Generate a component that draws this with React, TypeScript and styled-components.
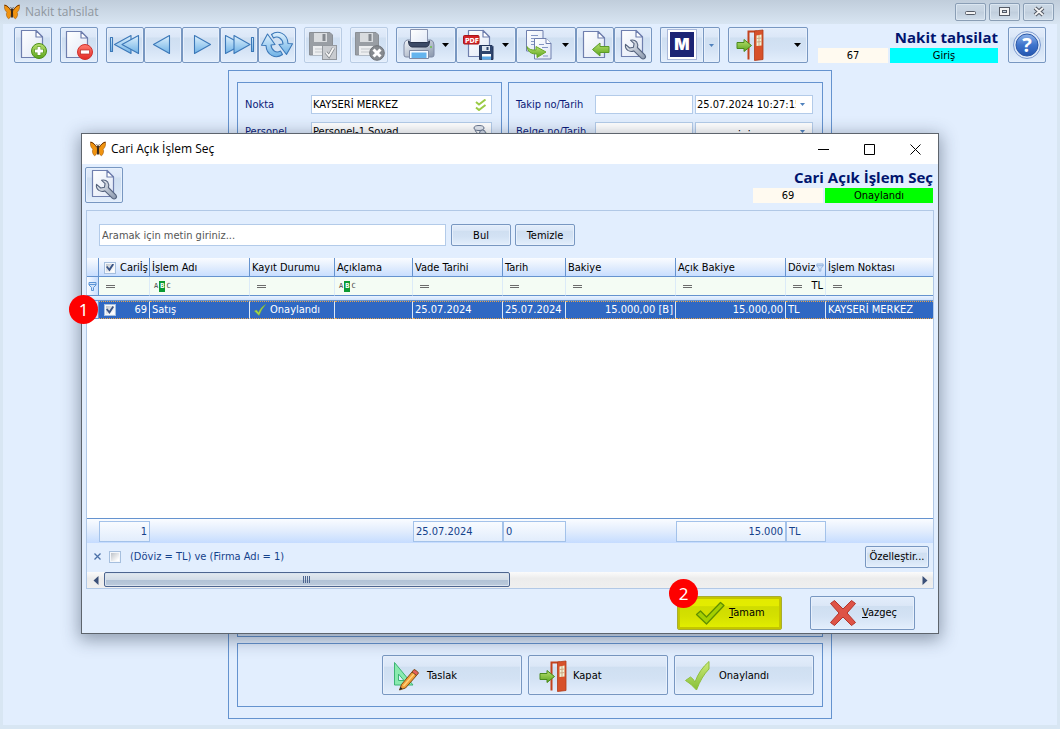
import React from "react";
import styled, { createGlobalStyle, css } from "styled-components";

const Global = createGlobalStyle`
  *, *::before, *::after { box-sizing: border-box; }
  body { margin: 0; background: #d8e6f3; }
  body, button, input {
    font-family: "DejaVu Sans Condensed", "DejaVu Sans", sans-serif;
    font-size: 11px;
    line-height: 14px;
    color: #000;
  }
  button { margin: 0; padding: 0; cursor: default; }
  svg { display: block; flex: none; }
`;

/* ---------- shell ---------- */

const AppWindow = styled.div`
  display: flex;
  flex-direction: column;
  min-height: 100vh;
  padding: 0 3px 4px;
  background: #d8e6f3;
`;

const TitleBar = styled.header`
  display: flex;
  align-items: center;
  height: 24px;
  margin: 0 -3px;
  padding: 0 6px 0 4px;
  gap: 5px;
  background: linear-gradient(#c0cddb, #d8e5f2);
`;

const WindowTitle = styled.h1<{ $muted?: boolean }>`
  flex: 1;
  margin: 0;
  font: 400 12px/16px "Open Sans", "Noto Sans", sans-serif;
  color: ${(p) => (p.$muted ? "#8f979f" : "#000")};
`;

const FrameButtons = styled.div<{ $flush?: boolean }>`
  display: flex;
  gap: ${(p) => (p.$flush ? 0 : 3)}px;
`;

const FrameButton = styled.button`
  display: grid;
  place-items: center;
  width: 31px;
  height: 18px;
  border: 1px solid #8a9eb5;
  border-radius: 2px;
  background: linear-gradient(#cbd8e5, #c6d3e1 45%, #bfcddc 50%, #d2dfec);
  box-shadow: inset 0 0 0 1px #dbe6f1;
`;

const Client = styled.main`
  display: flex;
  flex: 1;
  flex-direction: column;
  background: #e2eefe;
`;

/* ---------- toolbar ---------- */

const Toolbar = styled.div`
  display: flex;
  gap: 8px;
  padding: 3px 11px 0;
`;

const ButtonGroup = styled.div`
  display: flex;
`;

const face = css`
  border: 1px solid #7897c1;
  border-radius: 2px;
  background: linear-gradient(#e3edfb, #dbe7f7 27%, #cfdff1 29%, #d3e2f4 60%, #e3eefc);
  box-shadow: inset 0 0 0 1px #e7f0fc;
`;

const ToolButton = styled.button<{ $width?: number; $side?: "left" | "right" }>`
  ${face}
  display: flex;
  align-items: center;
  justify-content: ${(p) => (p.$width && p.$width > 50 ? "space-between" : "center")};
  width: ${(p) => p.$width ?? 38}px;
  height: 36px;
  padding: 0 6px;
  flex: none;
  ${(p) => (p.$width ?? 38) < 50 && "padding: 0;"}
  ${(p) => p.$side === "left" && "border-radius: 2px 0 0 2px; border-right: 0;"}
  ${(p) => p.$side === "right" && "border-radius: 0 2px 2px 0;"}
  &:disabled { border-color: #b9cce4; }
`;

const Status = styled.div<{ $compact?: boolean }>`
  width: 180px;
  margin-left: auto;
  margin-right: ${(p) => (p.$compact ? 0 : 2)}px;
`;

const StatusTitle = styled.h2`
  margin: 0;
  font: 700 15px/21px "Open Sans", "Noto Sans", sans-serif;
  color: #00146e;
  text-align: right;
  white-space: nowrap;
`;

const StatusRow = styled.div`
  display: flex;
  gap: 2px;
  text-align: center;
  line-height: 15px;
`;

const StatusNumber = styled.span`
  width: 70px;
  height: 15px;
  background: #fffaf0;
`;

const StatusLabel = styled.span<{ $color: string }>`
  flex: 1;
  height: 15px;
  background: ${(p) => p.$color};
`;

/* ---------- form ---------- */

const Sheet = styled.section`
  display: flex;
  flex: 1;
  flex-direction: column;
  gap: 6px;
  width: 604px;
  max-width: 100%;
  margin: 7px auto 6px;
  padding: 11px 8px;
  border: 1px solid #6593cf;
`;

const Columns = styled.div`
  display: grid;
  grid-template-columns: 265fr 315fr;
  gap: 6px;
`;

const Panel = styled.div<{ $grow?: boolean }>`
  border: 1px solid #6593cf;
  padding: 12px 9px 12px 7px;
  ${(p) => p.$grow && "flex: 1;"}
`;

const FieldRow = styled.div<{ $labelWidth: number }>`
  display: grid;
  grid-template-columns: ${(p) => p.$labelWidth}px 1fr;
  align-items: center;
  margin-bottom: 8px;
  color: #0b1a78;
`;

const FieldPair = styled.div`
  display: grid;
  grid-template-columns: 98fr 118fr;
  gap: 2px;
`;

const FieldBox = styled.div`
  display: flex;
  align-items: center;
  height: 19px;
  min-width: 0;
  padding-right: 4px;
  border: 1px solid #b3cbe9;
  background: #fff;
`;

const BareInput = styled.input`
  flex: 1;
  min-width: 0;
  width: 0;
  height: 17px;
  padding: 0 1px;
  border: 0;
  outline: 0;
  background: transparent;
`;

const InlineButton = styled.button`
  display: grid;
  place-items: center;
  min-width: 11px;
  height: 17px;
  border: 0;
  background: none;
`;

const ActionPanel = styled.div`
  display: flex;
  justify-content: flex-end;
  gap: 6px;
  padding: 11px 8px;
  border: 1px solid #6593cf;
`;

const ActionButton = styled.button`
  ${face}
  display: flex;
  align-items: center;
  gap: 3px;
  width: 140px;
  height: 40px;
  padding: 1px 9px 0;
`;

/* ---------- dialog ---------- */

const Dialog = styled.section`
  position: absolute;
  top: 133px;
  left: 81px;
  right: 121px;
  border: 1px solid #5d646d;
  background: #e2eefe;
  box-shadow: 0 4px 16px 2px rgba(30, 45, 70, 0.42);
`;

const DialogTitleBar = styled.header`
  display: flex;
  align-items: center;
  gap: 5px;
  height: 30px;
  padding-left: 8px;
  background: #fff;
`;

const CaptionButton = styled.button`
  display: grid;
  place-items: center;
  width: 46px;
  height: 28px;
  border: 0;
  background: none;
`;

const DialogHead = styled.div`
  display: flex;
  padding: 3px 5px 7px 3px;
`;

const GridPanel = styled.div`
  margin: 0 4px;
  border: 1px solid #b1c8e6;
`;

const SearchRow = styled.div`
  display: flex;
  gap: 5px;
  padding: 13px 12px 12px;
`;

const SearchInput = styled.input`
  width: 347px;
  height: 22px;
  padding: 0 2px;
  border: 1px solid #b3cbe9;
  outline: 0;
  background: #fff;
  &::placeholder { color: #555; opacity: 1; }
`;

const SmallButton = styled.button<{ $width: number }>`
  ${face}
  width: ${(p) => p.$width}px;
  height: 22px;
  padding-top: 1px;
  white-space: nowrap;
  & + & { margin-left: -1px; }
`;

const Table = styled.table`
  width: 100%;
  table-layout: fixed;
  border-collapse: separate;
  border-spacing: 0;
  background: #fff;
  white-space: nowrap;
  th, td { padding: 0 2px; overflow: hidden; text-align: left; font-weight: 400; }
`;

const HeadCell = styled.th<{ $tight?: boolean }>`
  height: 19px;
  border-right: 1px solid #6593cf;
  border-bottom: 1px solid #6593cf;
  background: linear-gradient(#fafcff, #e2edfd 50%, #c8deff);
  && { padding: 1px ${(p) => (p.$tight ? 0 : 2)}px 0 2px; }
  &:last-child { border-right: 0; }
`;

const FilterCell = styled.td`
  height: 19px;
  border-right: 1px solid #dcebf8;
  border-bottom: 1px solid #6593cf;
  background: #f4fcf4;
  &:last-child { border-right: 0; }
`;

const Gutter = styled.td`
  && { padding: 0; }
  border-right: 1px solid #6593cf;
  border-bottom: 1px solid #6593cf;
  background: linear-gradient(90deg, #fafcff, #c8deff);
`;

const Strip = styled.td`
  height: 5px;
  border-bottom: 1px solid #6593cf;
  background: linear-gradient(#eaf3ff, #cfe2fc);
`;

const DataCell = styled.td<{ $right?: boolean }>`
  height: 18px;
  border-top: 1px dotted #e8a54a;
  border-bottom: 1px dotted #e8a54a;
  border-right: 1px solid #dce9f8;
  background: #2f68c3;
  color: #fff;
  && { text-align: ${(p) => (p.$right ? "right" : "left")}; }
  &:last-child { border-right: 0; }
`;

const Blank = styled.td`
  height: 199px;
`;

const FootCell = styled.td`
  height: 25px;
  border-top: 1px solid #6593cf;
  background: linear-gradient(#fafcff, #e2edfd 50%, #c5dcff);
  && { padding: 0; }
`;

const Total = styled.div<{ $right?: boolean }>`
  height: 21px;
  padding: 3px 2px;
  border: 1px solid #a3c2ea;
  background: linear-gradient(#f8fbff, #e2edfc);
  color: #15428b;
  text-align: ${(p) => (p.$right ? "right" : "left")};
`;

const CellLine = styled.div<{ $gap?: number; $pad?: number; $end?: boolean }>`
  display: flex;
  align-items: center;
  justify-content: ${(p) => (p.$end ? "space-between" : "flex-start")};
  gap: ${(p) => p.$gap ?? 4}px;
  padding-left: ${(p) => p.$pad ?? 0}px;
`;

const ClipText = styled.span`
  min-width: 0;
  flex: 0 1 auto;
  overflow: hidden;
`;

const Check = styled.input`
  appearance: none;
  position: relative;
  flex: none;
  width: 12px;
  height: 12px;
  margin: 0;
  border: 1px solid #a6bfde;
  background: linear-gradient(135deg, #b4bac1, #fff 80%);
  box-shadow: inset 0 0 0 1px #f4f7fb;
  &:checked::before {
    content: "";
    position: absolute;
    inset: 1px;
    background: #3a5486;
    clip-path: polygon(0 45%, 18% 30%, 40% 58%, 82% 0, 100% 12%, 44% 100%);
  }
`;

const FilterBar = styled.div`
  display: flex;
  align-items: center;
  gap: 6px;
  height: 29px;
  padding: 0 4px 2px 5px;
  color: #15428b;
  label { flex: 1; padding-left: 3px; }
`;

const ScrollRow = styled.div`
  display: flex;
  height: 16px;
  background: linear-gradient(#fbfbfb, #ececec 40%, #efefef);
`;

const ScrollArrow = styled.button`
  display: grid;
  place-items: center;
  width: 17px;
  border: 0;
  background: none;
`;

const ScrollTrack = styled.div`
  flex: 1;
`;

const ScrollThumb = styled.div`
  display: grid;
  place-items: center;
  width: 50%;
  height: 15px;
  border: 1px solid #4d658f;
  border-radius: 2px;
  background: linear-gradient(#e3e9ef, #d3dde8 50%, #b1c2d5 54%, #bccbdc);
  box-shadow: inset 0 0 0 1px #d9e3ee;
`;

const DialogFooter = styled.footer`
  display: flex;
  justify-content: flex-end;
  gap: 28px;
  padding: 7px 23px 3px;
`;

const FooterItem = styled.div`
  position: relative;
`;

const DialogButton = styled.button<{ $highlight?: boolean }>`
  ${face}
  display: flex;
  align-items: center;
  gap: 3px;
  width: 105px;
  height: 34px;
  padding: 0 16px;
  ${(p) =>
    p.$highlight &&
    css`
      border: 1px solid #a9ae2e;
      background: linear-gradient(#e3ea00, #e3ec00 28%, #cfdc00 30%, #d4e000 60%, #e4f000);
      box-shadow: inset 0 0 0 2px #c4c600;
    `}
`;

const Badge = styled.span<{ $place: "row" | "button" }>`
  position: absolute;
  ${(p) => (p.$place === "row" ? "top: 161px; left: -13px;" : "top: -17px; left: -8px;")}
  z-index: 2;
  width: 29px;
  height: 29px;
  border-radius: 50%;
  background: #fe0000;
  color: #fff;
  font: 400 17px/29px "Noto Sans", sans-serif;
  text-align: center;
`;

/* ---------- icons ---------- */

const Icon = ({ children, size = 32 }: { children: React.ReactNode; size?: number }) => (
  <svg width={size} height={size} viewBox={`0 0 ${size} ${size}`} aria-hidden="true">
    {children}
  </svg>
);

const HiddenSvg = styled.svg`
  position: absolute;
`;

const Gradients = () => (
  <HiddenSvg width="0" height="0" aria-hidden="true">
    <defs>
      <linearGradient id="paper" x1="0" y1="0" x2="1" y2="1">
        <stop offset="0" stopColor="#fff" />
        <stop offset="1" stopColor="#dfe7f6" />
      </linearGradient>
      <linearGradient id="green" x1="0" y1="0" x2="0" y2="1">
        <stop offset="0" stopColor="#b9e070" />
        <stop offset="1" stopColor="#5ba51c" />
      </linearGradient>
      <linearGradient id="lime" x1="0" y1="0" x2="0" y2="1">
        <stop offset="0" stopColor="#cdea7c" />
        <stop offset="1" stopColor="#86bf36" />
      </linearGradient>
      <linearGradient id="red" x1="0" y1="0" x2="0" y2="1">
        <stop offset="0" stopColor="#ff7a70" />
        <stop offset="1" stopColor="#e32a24" />
      </linearGradient>
      <linearGradient id="sky" x1="0" y1="0" x2="0" y2="1">
        <stop offset="0" stopColor="#dff1fd" />
        <stop offset="1" stopColor="#6fb2e6" />
      </linearGradient>
      <linearGradient id="steel" x1="0" y1="0" x2="1" y2="1">
        <stop offset="0" stopColor="#f2f5f9" />
        <stop offset="1" stopColor="#8896ac" />
      </linearGradient>
      <linearGradient id="globe" x1="0" y1="0" x2="0" y2="1">
        <stop offset="0" stopColor="#8fb4ea" />
        <stop offset="0.5" stopColor="#3f74cc" />
        <stop offset="1" stopColor="#2456b0" />
      </linearGradient>
    </defs>
  </HiddenSvg>
);

const Page = ({ x = 4, y = 1, w = 22, h = 27 }) => (
  <g stroke="#6f7fae" strokeWidth="1.2" strokeLinejoin="round">
    <path
      fill="url(#paper)"
      d={`M${x + 0.5} ${y + 0.5}H${x + w - 7}L${x + w - 0.5} ${y + 7}V${y + h - 0.5}H${x + 0.5}Z`}
    />
    <path fill="#fff" d={`M${x + w - 7} ${y + 0.5}V${y + 7}H${x + w - 0.5}Z`} />
  </g>
);

const Butterfly = () => (
  <Icon size={16}>
    <g stroke="#a35a0c" strokeWidth="0.6" fill="#f0930f">
      <path d="M7.500 8C6 4.500 3 1 .5 1c-.4 2.500.3 5.800 2.400 7.200C1.800 10 2.500 13 4.500 14.800 6.500 14 7.300 11.500 7.500 8Z" />
      <path d="M8.500 8C10 4.500 13 1 15.500 1c.4 2.500-.3 5.800-2.400 7.200C14.200 10 13.500 13 11.500 14.800 9.500 14 8.700 11.500 8.500 8Z" />
    </g>
    <path d="M.6 1.200C3 1.500 5.500 4 7 6.500M15.400 1.200C13 1.500 10.500 4 9 6.500" stroke="#6e3606" strokeWidth="1" fill="none" />
    <path d="M8 5v8.500" stroke="#2d1d10" strokeWidth="1.800" />
    <path d="M8 5.500L6.500 3M8 5.500L9.500 3" stroke="#2d1d10" strokeWidth="0.6" />
  </Icon>
);

const AddPage = () => (
  <Icon>
    <Page h={28} />
    <circle cx="22" cy="22" r="7.500" fill="url(#green)" stroke="#4d8f18" />
    <path d="M22 17.500v9M17.500 22h9" stroke="#4b8a18" strokeWidth="4.200" />
    <path d="M22 18v8M18 22h8" stroke="#fff" strokeWidth="3" />
  </Icon>
);

const RemovePage = () => (
  <Icon>
    <Page x={3} y={2} />
    <circle cx="22" cy="23" r="7.500" fill="url(#red)" stroke="#d0322c" />
    <rect x="17.500" y="21" width="9" height="4" fill="#fff" stroke="#b92a24" strokeWidth="0.7" />
  </Icon>
);

const NavIcon = ({ shapes }: { shapes: string[] }) => (
  <Icon>
    <g fill="url(#sky)" stroke="#3c78b8" strokeWidth="1.100" strokeLinejoin="round">
      {shapes.map((d) => (
        <path key={d} d={d} />
      ))}
    </g>
  </Icon>
);

const Refresh = () => (
  <Icon>
    <g fill="url(#sky)" stroke="#3c78b8" strokeWidth="1.100" strokeLinejoin="round">
      <path d="M10.500 5.500C17 .5 26.500 4.500 27 14.500L31.500 14.800 25.500 25.500 18 15.500 22 15C21.500 9.500 17 6.500 12.500 9Z" />
      <path d="M21.500 25.500C15 30.500 5.500 26.500 5 16.500L.5 16.200 6.500 5 14 15.500 10 16C10.500 21.500 15 24.500 19.500 22Z" />
    </g>
  </Icon>
);

const GreyDisk = ({ children }: { children: React.ReactNode }) => (
  <Icon>
    <path d="M2.500 3.500H23L25.500 6V26H2.500Z" fill="#999ea4" stroke="#8a8f95" />
    <rect x="7" y="4" width="13" height="9" fill="#d9dcdf" />
    <rect x="15.500" y="5" width="3" height="7" fill="#83888e" />
    <rect x="6" y="17" width="16" height="9" fill="#eceef0" />
    <path d="M8 20h12M8 23h12" stroke="#c3c7cb" />
    {children}
  </Icon>
);

const SaveCheck = () => (
  <GreyDisk>
    <rect x="15.500" y="16.500" width="14" height="14" fill="#c9ccd0" stroke="#93989e" />
    <path d="M19 23.500l3 3.500 4.500-8" fill="none" stroke="#7d8288" strokeWidth="3.200" />
    <path d="M19 23.500l3 3.500 4.500-8" fill="none" stroke="#f5f5f5" strokeWidth="1.800" />
  </GreyDisk>
);

const SaveCancel = () => (
  <GreyDisk>
    <circle cx="24" cy="24" r="7.300" fill="#868a8f" stroke="#6f7378" />
    <path d="M20.500 20.500l7 7M27.500 20.500l-7 7" stroke="#fff" strokeWidth="3" />
  </GreyDisk>
);

const Printer = () => (
  <Icon>
    <path d="M4 11Q1 12 1 16V26q0 2 2 2H29q2 0 2-2V16q0-4-3-5Z" fill="url(#steel)" stroke="#7e8aa5" />
    <path d="M7.500.5H24.500V14H7.500Z" fill="url(#paper)" stroke="#8892ad" />
    <path d="M5.500 12Q5.500 17.500 9 18H23q3.500-.5 3.500-6l-2 1.500h-17Z" fill="#3c4a66" stroke="#28334c" />
    <path d="M6.500 21.500h19v8h-19Z" fill="#f7faff" stroke="#7e8aa5" />
    <path d="M8.500 23.500h15V29h-15Z" fill="#64b4ee" />
    <circle cx="28" cy="18" r="1" fill="#6cc04a" />
  </Icon>
);

const PdfText = styled.text`
  font: 700 7px "DejaVu Sans Condensed", sans-serif;
  fill: #fff;
`;

const Pdf = () => (
  <Icon>
    <Page x={5} />
    <rect x=".5" y="6.500" width="15.500" height="8.500" rx="1" fill="#d32326" stroke="#a71518" />
    <PdfText x="2" y="13.500">PDF</PdfText>
    <path d="M16.500 16.500H29l1 1V30.500H16.500Z" fill="#2f456d" stroke="#22345a" />
    <rect x="19" y="17" width="8" height="5" fill="#dde5f0" />
    <rect x="23.500" y="18" width="2" height="3" fill="#2f456d" />
    <rect x="19" y="25" width="9" height="5.500" fill="#fff" />
    <rect x="19" y="27.500" width="9" height="3" fill="#5aa7e6" />
  </Icon>
);

const CopyPages = () => (
  <Icon>
    <path d="M3.500 1.500H20V22H3.500Z" fill="url(#paper)" stroke="#6f7fae" />
    <path d="M8 6.500h7M8 9.500h7M8 12.500h4M8 15.500h4" stroke="#8597c4" />
    <path d="M11.500 9.500H23l5 5V30H11.500Z" fill="url(#paper)" stroke="#6f7fae" />
    <path d="M23 9.500v5h5" fill="#fff" stroke="#6f7fae" />
    <path d="M16 15.500h5M19 18.500h6M20 27h5" stroke="#8597c4" />
    <path d="M4 17.500q2 4 9 3.500v-3.500l10 5.500-9 5.500v-3.500Q5 25.500 4 17.500Z" fill="url(#green)" stroke="#6aa82a" />
  </Icon>
);

const PageArrow = () => (
  <Icon>
    <Page y={2} />
    <path d="M13.500 20.500L21 14v3.500h9v6h-9V27Z" fill="url(#green)" stroke="#5a9a28" strokeLinejoin="round" />
  </Icon>
);

const PageWrench = () => (
  <Icon>
    <Page />
    <path
      d="M13.500 11.200q4-1 6.300 2 1.700 2.600.6 5.300l7.600 7.600q1.200 1.700-.2 3.200-1.700 1.300-3.300.1l-7.700-7.500q-3 1.300-6-.5-3-2.300-2.300-6l4.200 3.600 3.700-.7.700-3.600Z"
      fill="url(#steel)"
      stroke="#56647e"
      strokeWidth="1.100"
      strokeLinejoin="round"
    />
  </Icon>
);

const LogoText = styled.text`
  font: 900 16px Inter, "Open Sans", sans-serif;
  fill: #fff;
`;

const LogoM = () => (
  <Icon>
    <rect x="1.500" y=".5" width="29" height="30" fill="#fff" stroke="#aab9da" />
    <rect x="4" y="3" width="24" height="25" fill="#1b2474" />
    <LogoText x="16" y="21" textAnchor="middle">M</LogoText>
  </Icon>
);

const Door = () => (
  <Icon>
    <path d="M13.500 30.500V2.500H22" fill="none" stroke="#c3421d" strokeWidth="2" />
    <path d="M19.500 2L28 1V30.500L19.500 31.500Z" fill="#d7512a" stroke="#b03a18" strokeWidth="0.8" />
    <path d="M21.500 6.500l5-1v11l-5 .5Z" fill="#f1f3d6" />
    <path d="M24 6v11M21.500 9.500l5-.5M21.500 13l5-.4" stroke="#c9a27a" strokeWidth="0.900" />
    <path d="M2 13.500H9V10.500l7.500 6L9 22.500V19.500H2Z" fill="url(#green)" stroke="#4a8a1c" strokeLinejoin="round" />
  </Icon>
);

const HelpMark = styled.text`
  font: 700 20px "Open Sans", sans-serif;
  fill: #fff;
`;

const Help = () => (
  <Icon>
    <circle cx="16" cy="16" r="13.500" fill="#dfe9f8" stroke="#7d9bd0" />
    <circle cx="16" cy="16" r="11" fill="url(#globe)" stroke="#2c59a8" />
    <HelpMark x="16" y="23" textAnchor="middle">?</HelpMark>
  </Icon>
);

const DropArrow = ({ color = "#000", small = false }) => (
  <svg width={small ? 5 : 7} height={small ? 3 : 4} viewBox="0 0 7 4" aria-hidden="true">
    <path d="M0 0h7L3.500 4Z" fill={color} />
  </svg>
);

const DoubleCheck = () => (
  <Icon size={12}>
    <path d="M1 3l3 2.500L10.500.5M1 8.500l3 2.500L10.500 6" fill="none" stroke="#9acb45" strokeWidth="2" />
  </Icon>
);

const PersonPick = () => (
  <Icon size={14}>
    <ellipse cx="6" cy="3" rx="5" ry="2.500" fill="#e6ebf2" stroke="#67748c" />
    <path d="M2 5q2 5 8 5l3-2" fill="none" stroke="#67748c" />
    <circle cx="9.500" cy="8" r="3" fill="#d5dce8" stroke="#67748c" />
    <path d="M8 11l2 2 4-5" fill="none" stroke="#5da329" strokeWidth="1.500" />
  </Icon>
);

const TickIcon = () => (
  <Icon>
    <path
      d="M1.500 20.500L6.500 17q2.500 1.500 4.500 5Q15.500 9.500 25 1.500V9Q17.500 16.500 12.500 30 7 23.500 1.500 20.500Z"
      fill="url(#lime)"
      stroke="#8fbf3e"
      strokeLinejoin="round"
    />
  </Icon>
);

const SmallTick = () => (
  <Icon size={12}>
    <path d="M.5 7l2-1 2 2.500Q7 3 11.500 .5 7.500 5 5 11.500Z" fill="#a6d64c" stroke="#7fb52e" strokeWidth="0.500" />
  </Icon>
);

const OkTick = () => (
  <Icon>
    <path
      d="M2.500 17.500L6.500 14 12.500 20 26.500 5.500 30 8.500 12.500 27Z"
      fill="#a4cf00"
      stroke="#5f8f00"
      strokeWidth="1.300"
      strokeLinejoin="round"
    />
  </Icon>
);

const CancelCross = () => (
  <Icon>
    <path
      d="M3.500 6.500L7.500 3.500 16 12 24.500 3.500 28.500 6.500 20 16 28.500 25.500 24.500 28.500 16 20 7.500 28.500 3.500 25.500 12 16Z"
      fill="#de5346"
      stroke="#b2342a"
      strokeLinejoin="round"
    />
  </Icon>
);

const Draft = () => (
  <Icon>
    <path d="M2.500 2.500L21 25H2.500Z" fill="#8aeaae" stroke="#3cb474" strokeLinejoin="round" />
    <path d="M6.500 14l5.500 6.500H6.500Z" fill="#e2eefe" stroke="#3cb474" />
    <path d="M7.500 30L9.500 24.500 20 12 24.500 15.500 13.500 28Z" fill="#f2a03a" stroke="#7d4a14" strokeLinejoin="round" />
    <path d="M20 12L22 9.500q2.500.5 4.500 3.500L24.500 15.500Z" fill="#e65f5b" stroke="#7d4a14" />
    <path d="M7.500 30l1-3 2 1.500Z" fill="#222" />
    <path d="M11.500 26L22 14" stroke="#ffd27a" strokeWidth="1.500" />
  </Icon>
);

const Funnel = ({ color = "#5b94d6", width = 9 }) => (
  <svg width={width} height="9" viewBox="0 0 9 9" aria-hidden="true">
    <path d="M1 .5h7v2.500L5.500 5.500V8.500h-2V5.500L1 3Z" fill="#cfe2fa" stroke={color} />
    <path d="M1 2.500h7" stroke={color} />
  </svg>
);

const Equals = () => (
  <svg width="9" height="3" viewBox="0 0 9 3" aria-hidden="true">
    <path d="M0 .5h9M0 2.500h9" stroke="#6c6c6c" />
  </svg>
);

const AbcBox = styled.span`
  display: flex;
  align-items: center;
  font: 400 7px/11px "DejaVu Sans Mono", monospace;
  color: #444;
  b { margin: 0 1px; padding: 0 1px; background: #0b9a32; color: #fff; }
`;

const Abc = () => (
  <AbcBox>A<b>B</b>C</AbcBox>
);

const Arrow = ({ left = false }) => (
  <svg width="6" height="9" viewBox="0 0 6 9" aria-hidden="true">
    <path d={left ? "M5.500 0V9L.5 4.500Z" : "M.5 0V9L5.500 4.500Z"} fill="#3b5078" />
  </svg>
);

/* ---------- data ---------- */

const columns = [
  { title: "Cariİş", width: 51 },
  { title: "İşlem Adı", width: 100, filter: "abc" },
  { title: "Kayıt Durumu", width: 85 },
  { title: "Açıklama", width: 78, filter: "abc" },
  { title: "Vade Tarihi", width: 90 },
  { title: "Tarih", width: 63 },
  { title: "Bakiye", width: 110 },
  { title: "Açık Bakiye", width: 110 },
  { title: "Döviz", width: 40, filter: "tl" },
  { title: "İşlem Noktası" },
];

const totals: Record<number, [string, boolean]> = {
  0: ["1", true],
  4: ["25.07.2024", false],
  5: ["0", false],
  7: ["15.000", true],
  8: ["TL", false],
};

/* ---------- parts ---------- */

const StatusBlock = (p: { title: string; no: string; label: string; color: string; compact?: boolean }) => (
  <Status $compact={p.compact}>
    <StatusTitle>{p.title}</StatusTitle>
    <StatusRow>
      <StatusNumber>{p.no}</StatusNumber>
      <StatusLabel $color={p.color}>{p.label}</StatusLabel>
    </StatusRow>
  </Status>
);

const MainToolbar = () => (
  <Toolbar>
    <ToolButton aria-label="Yeni"><AddPage /></ToolButton>
    <ToolButton aria-label="Sil"><RemovePage /></ToolButton>
    <ButtonGroup>
      <ToolButton aria-label="İlk">
        <NavIcon shapes={["M1.500 8.500H3.500V22.500H1.500Z", "M5.500 15.500L22 6.500V24.500Z", "M13 15.500L29.500 6.500V24.500Z"]} />
      </ToolButton>
      <ToolButton aria-label="Önceki"><NavIcon shapes={["M6.500 15.500L22.500 6.500V24.500Z"]} /></ToolButton>
      <ToolButton aria-label="Sonraki"><NavIcon shapes={["M25.500 15.500L9.500 6.500V24.500Z"]} /></ToolButton>
      <ToolButton aria-label="Son">
        <NavIcon shapes={["M28.500 8.500H30.500V22.500H28.500Z", "M19.500 15.500L2.500 6.500V24.500Z", "M27 15.500L11 6.500V24.500Z"]} />
      </ToolButton>
      <ToolButton aria-label="Yenile"><Refresh /></ToolButton>
    </ButtonGroup>
    <ToolButton aria-label="Kaydet" disabled><SaveCheck /></ToolButton>
    <ToolButton aria-label="İptal" disabled><SaveCancel /></ToolButton>
    <ButtonGroup>
      <ToolButton $width={60} aria-label="Yazdır"><Printer /><DropArrow /></ToolButton>
      <ToolButton $width={60} aria-label="PDF kaydet"><Pdf /><DropArrow /></ToolButton>
      <ToolButton $width={60} aria-label="Kopyala"><CopyPages /><DropArrow /></ToolButton>
      <ToolButton aria-label="Aktar"><PageArrow /></ToolButton>
      <ToolButton aria-label="Ayarlar"><PageWrench /></ToolButton>
    </ButtonGroup>
    <ButtonGroup>
      <ToolButton $width={43} $side="left" aria-label="M"><LogoM /></ToolButton>
      <ToolButton $width={17} $side="right" aria-label="M seçenekleri"><DropArrow color="#4f81bd" small /></ToolButton>
    </ButtonGroup>
    <ToolButton $width={80} aria-label="Çıkış"><Door /><DropArrow /></ToolButton>
    <StatusBlock title="Nakit tahsilat" no="67" label="Giriş" color="#00ffff" />
    <ToolButton aria-label="Yardım"><Help /></ToolButton>
  </Toolbar>
);

const DocumentForm = () => (
  <Sheet>
    <Columns>
      <Panel>
        <FieldRow $labelWidth={66}>
          <label htmlFor="nokta">Nokta</label>
          <FieldBox>
            <BareInput id="nokta" defaultValue="KAYSERİ MERKEZ" />
            <InlineButton aria-label="Nokta seç"><DoubleCheck /></InlineButton>
          </FieldBox>
        </FieldRow>
        <FieldRow $labelWidth={66}>
          <label htmlFor="personel">Personel</label>
          <FieldBox>
            <BareInput id="personel" defaultValue="Personel-1 Soyad" />
            <InlineButton aria-label="Personel seç"><PersonPick /></InlineButton>
          </FieldBox>
        </FieldRow>
      </Panel>
      <Panel>
        <FieldRow $labelWidth={79}>
          <label htmlFor="takip">Takip no/Tarih</label>
          <FieldPair>
            <FieldBox><BareInput id="takip" /></FieldBox>
            <FieldBox>
              <BareInput aria-label="Takip tarihi" defaultValue="25.07.2024 10:27:15" />
              <InlineButton aria-label="Takvim"><DropArrow color="#4f81bd" small /></InlineButton>
            </FieldBox>
          </FieldPair>
        </FieldRow>
        <FieldRow $labelWidth={79}>
          <label htmlFor="belge">Belge no/Tarih</label>
          <FieldPair>
            <FieldBox><BareInput id="belge" /></FieldBox>
            <FieldBox>
              <BareInput aria-label="Belge tarihi" defaultValue="  .  .       :  :" />
              <InlineButton aria-label="Takvim"><DropArrow color="#4f81bd" small /></InlineButton>
            </FieldBox>
          </FieldPair>
        </FieldRow>
      </Panel>
    </Columns>
    <Panel $grow />
    <ActionPanel>
      <ActionButton><Draft />Taslak</ActionButton>
      <ActionButton><Door />Kapat</ActionButton>
      <ActionButton><TickIcon />Onaylandı</ActionButton>
    </ActionPanel>
  </Sheet>
);

const RecordTable = () => (
  <Table>
    <colgroup>
      <col width={12} />
      {columns.map((c) => (
        <col key={c.title} width={c.width} />
      ))}
    </colgroup>
    <thead>
      <tr>
        <HeadCell aria-label="Gösterge" />
        {columns.map((c, i) => (
          <HeadCell key={c.title} scope="col" $tight={i === 0 || c.filter === "tl"}>
            {i === 0 ? (
              <CellLine $gap={4} $pad={3}>
                <Check type="checkbox" defaultChecked aria-label="Tümünü seç" />
                <ClipText>{c.title}</ClipText>
              </CellLine>
            ) : c.filter === "tl" ? (
              <CellLine $gap={1}>
                <ClipText>{c.title}</ClipText>
                <Funnel color="#8fb0dc" width={8} />
              </CellLine>
            ) : (
              c.title
            )}
          </HeadCell>
        ))}
      </tr>
    </thead>
    <tbody>
      <tr>
        <Gutter><CellLine $pad={1}><Funnel /></CellLine></Gutter>
        {columns.map((c) => (
          <FilterCell key={c.title}>
            <CellLine $pad={c.filter === "abc" ? 2 : 5} $end={c.filter === "tl"}>
              {c.filter === "abc" ? <Abc /> : <Equals />}
              {c.filter === "tl" && <span>TL</span>}
            </CellLine>
          </FilterCell>
        ))}
      </tr>
      <tr>
        <Strip colSpan={11} />
      </tr>
      <tr>
        <Gutter />
        <DataCell>
          <CellLine $pad={3} $end>
            <Check type="checkbox" defaultChecked aria-label="Kaydı seç" />
            69
          </CellLine>
        </DataCell>
        <DataCell>Satış</DataCell>
        <DataCell>
          <CellLine $pad={2}><SmallTick />Onaylandı</CellLine>
        </DataCell>
        <DataCell />
        <DataCell>25.07.2024</DataCell>
        <DataCell>25.07.2024</DataCell>
        <DataCell $right>15.000,00 [B]</DataCell>
        <DataCell $right>15.000,00</DataCell>
        <DataCell>TL</DataCell>
        <DataCell>KAYSERİ MERKEZ</DataCell>
      </tr>
      <tr>
        <Blank colSpan={11} />
      </tr>
    </tbody>
    <tfoot>
      <tr>
        <FootCell />
        {columns.map((c, i) => (
          <FootCell key={c.title}>
            {totals[i] && <Total $right={totals[i][1]}>{totals[i][0]}</Total>}
          </FootCell>
        ))}
      </tr>
    </tfoot>
  </Table>
);

const PickDialog = () => (
  <Dialog role="dialog" aria-labelledby="pick-title">
    <DialogTitleBar>
      <Butterfly />
      <WindowTitle as="h2" id="pick-title">Cari Açık İşlem Seç</WindowTitle>
      <FrameButtons $flush>
        <CaptionButton aria-label="Simge durumuna küçült">
          <Icon size={11}><path d="M0 5.500h11" stroke="#000" /></Icon>
        </CaptionButton>
        <CaptionButton aria-label="Ekranı kapla">
          <Icon size={11}><path d="M.5.5h10v10H.5Z" fill="none" stroke="#000" /></Icon>
        </CaptionButton>
        <CaptionButton aria-label="Pencereyi kapat">
          <Icon size={11}><path d="M.5.5l10 10M10.500.5l-10 10" stroke="#000" /></Icon>
        </CaptionButton>
      </FrameButtons>
    </DialogTitleBar>
    <DialogHead>
      <ToolButton aria-label="Ayarlar"><PageWrench /></ToolButton>
      <StatusBlock title="Cari Açık İşlem Seç" no="69" label="Onaylandı" color="#00ff00" compact />
    </DialogHead>
    <GridPanel>
      <SearchRow>
        <SearchInput type="search" placeholder="Aramak için metin giriniz..." aria-label="Ara" />
        <SmallButton $width={60}>Bul</SmallButton>
        <SmallButton $width={60}>Temizle</SmallButton>
      </SearchRow>
      <RecordTable />
      <FilterBar>
        <InlineButton aria-label="Filtreyi kaldır">
          <Icon size={7}><path d="M.5.5l6 6M6.500.5l-6 6" stroke="#4a70a8" strokeWidth="1.300" /></Icon>
        </InlineButton>
        <Check type="checkbox" id="filter-on" />
        <label htmlFor="filter-on">(Döviz = TL) ve (Firma Adı = 1)</label>
        <SmallButton $width={64}>Özelleştir...</SmallButton>
      </FilterBar>
      <ScrollRow>
        <ScrollArrow aria-label="Sola kaydır"><Arrow left /></ScrollArrow>
        <ScrollTrack>
          <ScrollThumb>
            <svg width="8" height="7" viewBox="0 0 8 7" aria-hidden="true">
              <path d="M.5 0v7M2.500 0v7M4.500 0v7M6.500 0v7" stroke="#4d658f" />
            </svg>
          </ScrollThumb>
        </ScrollTrack>
        <ScrollArrow aria-label="Sağa kaydır"><Arrow /></ScrollArrow>
      </ScrollRow>
    </GridPanel>
    <DialogFooter>
      <FooterItem>
        <DialogButton $highlight><OkTick /><span><u>T</u>amam</span></DialogButton>
        <Badge $place="button">2</Badge>
      </FooterItem>
      <DialogButton><CancelCross /><span><u>V</u>azgeç</span></DialogButton>
    </DialogFooter>
    <Badge $place="row">1</Badge>
  </Dialog>
);

export default function App() {
  return (
    <AppWindow>
      <Global />
      <Gradients />
      <TitleBar>
        <Butterfly />
        <WindowTitle $muted>Nakit tahsilat</WindowTitle>
        <FrameButtons>
          <FrameButton aria-label="Küçült">
            <Icon size={12}><rect x=".5" y="5.500" width="10" height="3" rx="1" fill="#f4f4f4" stroke="#555b66" /></Icon>
          </FrameButton>
          <FrameButton aria-label="Büyüt">
            <Icon size={12}>
              <rect x=".5" y="1.500" width="10" height="8" fill="#f4f4f4" stroke="#555b66" />
              <rect x="3.500" y="4.500" width="4" height="2" fill="#c6d3e1" stroke="#555b66" />
            </Icon>
          </FrameButton>
          <FrameButton aria-label="Kapat">
            <Icon size={12}>
              <path d="M2 2l8 7M10 2l-8 7" stroke="#555b66" strokeWidth="4" />
              <path d="M2 2l8 7M10 2l-8 7" stroke="#f4f4f4" strokeWidth="1.800" />
            </Icon>
          </FrameButton>
        </FrameButtons>
      </TitleBar>
      <Client>
        <MainToolbar />
        <DocumentForm />
      </Client>
      <PickDialog />
    </AppWindow>
  );
}
